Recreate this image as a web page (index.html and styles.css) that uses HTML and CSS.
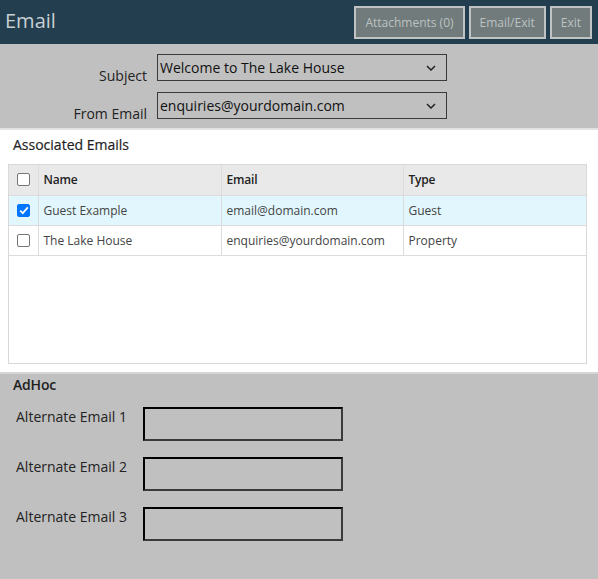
FILE: index.html
```html
<!DOCTYPE html>
<html>
<head>
<meta charset="utf-8">
<link rel="stylesheet" href="styles.css">
</head>
<body>
<div class="header">
  <div class="title">Email</div>
  <div class="actions">
    <button class="hbtn">Attachments (0)</button>
    <button class="hbtn">Email/Exit</button>
    <button class="hbtn">Exit</button>
  </div>
</div>
<div class="top">
  <div class="frow">
    <label class="flabel">Subject</label>
    <div class="select"><span>Welcome to The Lake House</span>
      <svg class="chev" width="10" height="6" viewBox="0 0 10 6"><path d="M1 1l4 4 4-4" fill="none" stroke="#222" stroke-width="1.5"/></svg></div>
  </div>
  <div class="frow">
    <label class="flabel">From Email</label>
    <div class="select"><span>enquiries@yourdomain.com</span>
      <svg class="chev" width="10" height="6" viewBox="0 0 10 6"><path d="M1 1l4 4 4-4" fill="none" stroke="#222" stroke-width="1.5"/></svg></div>
  </div>
</div>
<div class="assoc">
  <div class="stitle">Associated Emails</div>
  <div class="tablewrap">
    <table class="grid">
      <thead>
        <tr><th class="cb"><span class="box"></span></th><th class="cname">Name</th><th class="cemail">Email</th><th>Type</th></tr>
      </thead>
      <tbody>
        <tr class="sel"><td class="cb"><span class="box checked"><svg width="10" height="9" viewBox="0 0 10 9"><path d="M1.2 4.6l2.6 2.6L8.8 1.4" fill="none" stroke="#fff" stroke-width="1.8"/></svg></span></td><td>Guest Example</td><td>email@domain.com</td><td>Guest</td></tr>
        <tr><td class="cb"><span class="box"></span></td><td>The Lake House</td><td>enquiries@yourdomain.com</td><td>Property</td></tr>
      </tbody>
    </table>
  </div>
</div>
<div class="adhoc">
  <div class="stitle">AdHoc</div>
  <div class="arow"><label class="alabel">Alternate Email 1</label><div class="ainput"></div></div>
  <div class="arow"><label class="alabel">Alternate Email 2</label><div class="ainput"></div></div>
  <div class="arow"><label class="alabel">Alternate Email 3</label><div class="ainput"></div></div>
</div>
</body>
</html>
```
FILE: styles.css
```css
* { box-sizing: border-box; }
html, body { margin: 0; padding: 0; }
body {
  font-family: "Open Sans", "Noto Sans", sans-serif;
  background: #c0c0c0;
  width: 598px;
  height: 579px;
  overflow: hidden;
  color: #222;
}
.header {
  height: 44px;
  background: #223e4f;
  display: flex;
  align-items: center;
  justify-content: space-between;
  padding: 0 6px 0 5px;
}
.title {
  color: #c9d0d4;
  font-size: 20px;
  line-height: 44px;
  margin-top: -2px;
}
.actions { display: flex; gap: 4px; margin-top: 1px; }
.hbtn {
  font-family: "Open Sans", sans-serif;
  font-size: 12px;
  height: 33px;
  padding: 0 9px;
  background: #717b7b;
  color: #bcc2c2;
  border: 2px solid #bfc3c3;
  margin: 0;
}
.top {
  padding: 10px 0 8px 0;
  border-bottom: 2px solid #e2e2e2;
  height: 86px;
}
.frow {
  display: flex;
  align-items: flex-end;
  margin-bottom: 11px;
}
.flabel {
  width: 157px;
  text-align: right;
  padding-right: 10px;
  font-size: 14px;
  line-height: 16px;
  margin-bottom: -3px;
}
.select {
  width: 290px;
  height: 27px;
  border: 1px solid #3a3a3a;
  background: #c0c0c0;
  display: flex;
  align-items: center;
  justify-content: space-between;
  padding: 0 10px 0 2px;
  font-size: 14px;
  color: #111;
}
.assoc {
  background: #fff;
  height: 242px;
  padding: 5px 11px 0 8px;
}
.stitle {
  font-size: 14px;
  font-weight: 500;
  color: #1e1e1e;
  padding-left: 5px;
  height: 29px;
  line-height: 20px;
  -webkit-text-stroke: 0.2px #1e1e1e;
}
.tablewrap {
  border: 1px solid #d9d9d9;
  height: 200px;
}
.grid {
  width: 100%;
  border-collapse: collapse;
  font-size: 12px;
}
.grid th, .grid td {
  height: 30px;
  text-align: left;
  padding: 0 5px;
  border-right: 1px solid #dcdcdc;
  border-bottom: 1px solid #dcdcdc;
}
.grid th:last-child, .grid td:last-child { border-right: none; }
.grid th {
  background: #e9e9e9;
  font-weight: 600;
  color: #222;
  letter-spacing: -0.2px;
}
.grid td { color: #444; }
.grid tr.sel td { background: #e1f7fd; }
.grid .cb { width: 29px; padding: 0 0 0 8px; }
.grid .cname { width: 183px; }
.grid .cemail { width: 182px; }
.box {
  display: block;
  width: 13px;
  height: 13px;
  border: 1px solid #767676;
  border-radius: 2px;
  background: #fff;
}
.box.checked {
  background: #0075ff;
  border-color: #0075ff;
  display: flex;
  align-items: center;
  justify-content: center;
}
.adhoc {
  padding: 1px 8px 0 8px;
  border-top: 2px solid #d5d5d5;
}
.adhoc .stitle { height: 32px; font-weight: 600; letter-spacing: -0.2px; -webkit-text-stroke: 0; }
.arow {
  display: flex;
  align-items: flex-start;
  height: 50px;
}
.alabel {
  width: 135px;
  padding-left: 8px;
  font-size: 14px;
  line-height: 18px;
  margin-top: 1px;
}
.ainput {
  width: 200px;
  height: 34px;
  border: 2px solid;
  border-color: #000 #3a3a3a #3a3a3a #000;
  background: #c0c0c0;
}
```
